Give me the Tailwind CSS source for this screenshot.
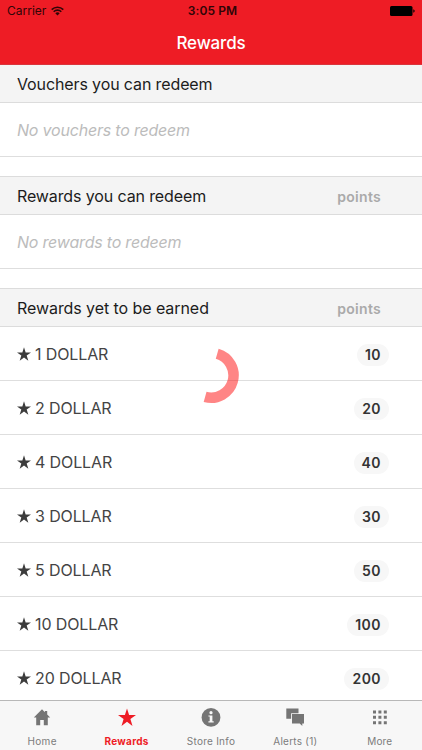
<!DOCTYPE html>
<html lang="en">
<head>
<meta charset="utf-8">
<title>Rewards</title>
<script src="https://cdn.jsdelivr.net/npm/@tailwindcss/browser@4"></script>
</head>
<body class="bg-white font-['Inter',sans-serif]">
<div class="relative flex flex-col w-[422px] h-[750px] overflow-hidden bg-white">
  <header class="h-[65px] shrink-0 bg-[#ee1c25] border-b border-[#d9353c]">
    <div class="grid grid-cols-3 items-center h-[22px] px-[7px] text-[12px] leading-[22px] text-[#300507]">
      <div class="flex items-center gap-[5px]"><span>Carrier</span>
        <svg class="w-[13px] h-[10px]" viewBox="0 0 13 10" fill="none" stroke="#300507" stroke-width="1.6"><path d="M.7 3.6a8.3 8.3 0 0 1 11.6 0M2.7 5.7a5.4 5.4 0 0 1 7.6 0"/><path d="M6.5 9.5 4.3 7.3a3.1 3.1 0 0 1 4.4 0z" fill="#300507" stroke="none"/></svg>
      </div>
      <span class="text-center font-semibold whitespace-nowrap pl-[3px] tracking-[.1px]">3:05 PM</span>
      <svg class="justify-self-end w-[25px] h-[10px]" viewBox="0 0 25 10"><rect width="22.5" height="10" rx="1.5"/><path d="M23.3 3.2q1.4.5 1.4 1.8t-1.4 1.8z"/></svg>
    </div>
    <h1 class="text-center text-[17px] leading-[42px] text-white font-medium tracking-[-.15px]">Rewards</h1>
  </header>
  <main class="flex-1 min-h-0 overflow-hidden text-[16px] tracking-[-.12px]">
    <div class="flex items-center h-[38px] pl-[17px] bg-[#f4f4f4] border-b border-[#dcdcdc] text-[#1c1c1c]"><h2>Vouchers you can redeem</h2></div>
    <div class="flex items-center h-[54px] pl-[17px] border-b border-[#dedede] italic text-[#bcbcbc] tracking-[-.2px]"><p>No vouchers to redeem</p></div>
    <div class="flex items-center justify-between h-[39px] mt-[19px] pl-[17px] pr-[41px] bg-[#f4f4f4] border-y border-[#dcdcdc] text-[#1c1c1c]"><h2>Rewards you can redeem</h2><span class="text-[14px] font-semibold text-[#aaa] pt-[2px] tracking-[.3px]">points</span></div>
    <div class="flex items-center h-[54px] pl-[17px] border-b border-[#dedede] italic text-[#bcbcbc] tracking-[-.2px]"><p>No rewards to redeem</p></div>
    <div class="flex items-center justify-between h-[39px] mt-[19px] pl-[17px] pr-[41px] bg-[#f4f4f4] border-y border-[#dcdcdc] text-[#1c1c1c]"><h2 class="tracking-[-.07px]">Rewards yet to be earned</h2><span class="text-[14px] font-semibold text-[#aaa] pt-[2px] tracking-[.3px]">points</span></div>
    <ul id="rewards"></ul>
  </main>
  <template id="row">
    <li class="flex items-center h-[54px] pl-[17px] pr-[33px] border-b border-[#dedede] text-[#444]">
      <svg class="w-[14px] h-[14px] mr-[4px]" viewBox="0 0 20 19" fill="#3c3c3c"><path d="M10 0l2.36 7.25H20l-6.18 4.5L16.18 19 10 14.5 3.82 19l2.36-7.25L0 7.25h7.64z"/></svg>
      <span class="name"></span>
      <b class="points mt-[2px] ml-auto h-[22px] px-[8px] rounded-full bg-[#f7f7f7] text-[14px] leading-[22px] font-semibold tracking-[.45px] text-[#333]"></b>
    </li>
  </template>
  <nav class="grid grid-cols-5 shrink-0 h-[50px] bg-[#f7f7f7] border-t border-[#b8b8b8] text-[10px] tracking-[.15px] text-[#7c7c7c] text-center">
    <a class="flex flex-col items-center"><svg class="w-[20px] h-[20px] mt-[7px]" viewBox="0 0 20 20" fill="#757575"><path d="M10 1.2 1.8 9.5h2.4v7.7h4V12h3.6v5.2h4V9.5h2.4l-3-3V3h-2.3v1.2z"/></svg><span class="leading-[12px] mt-[7px] tracking-[.3px]">Home</span></a>
    <a class="flex flex-col items-center text-[#ee1c25] font-bold"><svg class="w-[20px] h-[20px] mt-[7px]" viewBox="0 0 20 20" fill="#ee1c25"><path d="M10 .4l2.1 6.6H19l-5.6 4.1 2.1 6.8L10 13.8l-5.5 4.1 2.1-6.8L1 7h6.9z"/></svg><span class="leading-[12px] mt-[7px] tracking-[.3px]">Rewards</span></a>
    <a class="flex flex-col items-center"><svg class="w-[20px] h-[20px] mt-[7px]" viewBox="0 0 20 20"><circle cx="10" cy="9.4" r="9.4" fill="#757575"/><circle cx="10" cy="4.7" r="1.6" fill="#f7f7f7"/><path d="M7.4 7.4h4v5.9h1.3v1.2H7.4v-1.2h1.3V8.6H7.4z" fill="#f7f7f7"/></svg><span class="leading-[12px] mt-[7px] tracking-[.25px]">Store Info</span></a>
    <a class="flex flex-col items-center"><svg class="w-[20px] h-[20px] mt-[7px]" viewBox="0 0 20 20" fill="#757575"><path d="M1.3.6h12.2v4.6H6.1v5.5H1.3z"/><path d="M7 6.1h12v9.4h-1.7v2.6l-2.6-2.6H7z"/></svg><span class="leading-[12px] mt-[7px] tracking-[.25px]">Alerts (1)</span></a>
    <a class="flex flex-col items-center"><svg class="w-[20px] h-[20px] mt-[7px]" viewBox="0 0 20 20" fill="#757575"><path d="M3 2.4h3v3H3zM8.4 2.4h3v3h-3zM13.8 2.4h3v3h-3zM3 7.8h3v3H3zM8.4 7.8h3v3h-3zM13.8 7.8h3v3h-3zM3 13.2h3v3H3zM8.4 13.2h3v3h-3zM13.8 13.2h3v3h-3z"/></svg><span class="leading-[12px] mt-[7px]">More</span></a>
  </nav>
  <svg class="absolute left-[183px] top-[347px] w-[57px] h-[57px]" viewBox="183 347 57 57" fill="none"><path d="M217.2 353.8A22.3 22.3 0 0 1 205.1 396.9" stroke="#ff0000" stroke-opacity=".48" stroke-width="10.5"/></svg>
</div>
<script>
const rewards = [['1 DOLLAR',10],['2 DOLLAR',20],['4 DOLLAR',40],['3 DOLLAR',30],['5 DOLLAR',50],['10 DOLLAR',100],['20 DOLLAR',200]];
for (const [name, points] of rewards) {
  const row = document.getElementById('row').content.cloneNode(true);
  row.querySelector('.name').textContent = name;
  row.querySelector('.points').textContent = points;
  document.getElementById('rewards').append(row);
}
</script>
</body>
</html>
